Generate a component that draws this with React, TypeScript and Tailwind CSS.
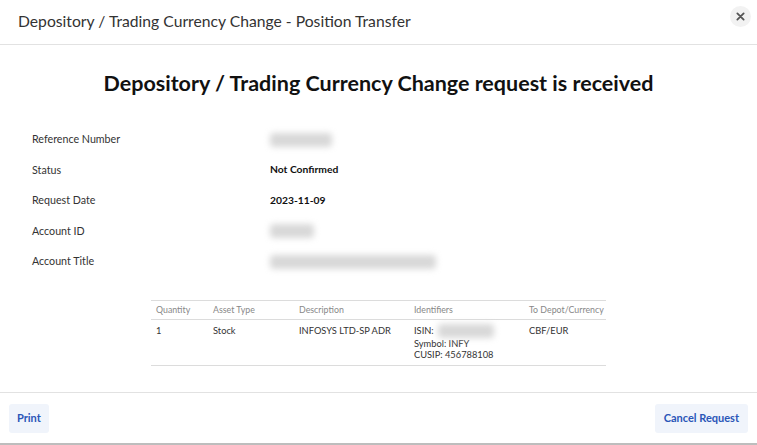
import * as React from "react";

const details: { label: string; value: string; blur?: number }[] = [
  { label: "Reference Number", value: "", blur: 62 },
  { label: "Status", value: "Not Confirmed" },
  { label: "Request Date", value: "2023-11-09" },
  { label: "Account ID", value: "", blur: 44 },
  { label: "Account Title", value: "", blur: 166 },
];

function Blurred({ width }: { width: number }) {
  return (
    <span className="inline-block h-[14px] align-middle" style={{ width }}>
      <span className="block h-full w-full rounded-sm bg-[#d8d8d8] blur-[3px]" />
    </span>
  );
}

export default function App() {
  return (
    <div className="flex h-[445px] w-[757px] flex-col bg-white font-['Lato',sans-serif] text-[#222]">
      {/* header */}
      <div className="flex h-[45px] items-center justify-between border-b border-[#e2e2e2] pl-[18px] pr-[6px]">
        <h2 className="text-[15.7px] font-normal text-[#333]">
          Depository / Trading Currency Change - Position Transfer
        </h2>
        <button className="mb-[12px] flex h-[21px] w-[21px] items-center justify-center rounded-full bg-[#f2f2f2]">
          <svg width="9" height="9" viewBox="0 0 10 10" stroke="#555" strokeWidth="2" strokeLinecap="round">
            <path d="M1.5 1.5l7 7M8.5 1.5l-7 7" />
          </svg>
        </button>
      </div>

      {/* body */}
      <div className="flex-1">
        <h1 className="mt-[22px] text-center text-[21.5px] font-bold text-[#111]">
          Depository / Trading Currency Change request is received
        </h1>

        <div className="mt-[25px] flex flex-col pl-[32px]">
          {details.map((d) => (
            <div key={d.label} className="flex h-[30.5px] items-center text-[10.7px]">
              <span className="w-[238px] text-[#333]">{d.label}</span>
              {d.blur ? (
                <Blurred width={d.blur} />
              ) : (
                <span className="text-[10.3px] font-bold text-[#111]">{d.value}</span>
              )}
            </div>
          ))}
        </div>

        <table className="mx-auto mt-[23px] w-[455px] table-fixed border-collapse text-left text-[9.3px]">
          <thead>
            <tr className="border-y border-[#dcdcdc] text-[8.8px] text-[#888]">
              <th className="h-[19px] w-[62px] pl-[5px] font-normal">Quantity</th>
              <th className="w-[86px] font-normal">Asset Type</th>
              <th className="w-[115px] font-normal">Description</th>
              <th className="w-[115px] font-normal">Identifiers</th>
              <th className="font-normal">To Depot/Currency</th>
            </tr>
          </thead>
          <tbody>
            <tr className="border-b border-[#dcdcdc] align-top text-[#333]">
              <td className="pl-[5px] pt-[4px]">1</td>
              <td className="pt-[4px]">Stock</td>
              <td className="pt-[4px]">INFOSYS LTD-SP ADR</td>
              <td className="pb-[4px] pt-[4px] leading-[11.5px]">
                <div className="flex items-center gap-[4px]">
                  ISIN: <Blurred width={56} />
                </div>
                <div>Symbol: INFY</div>
                <div>CUSIP: 456788108</div>
              </td>
              <td className="pt-[4px]">CBF/EUR</td>
            </tr>
          </tbody>
        </table>
      </div>

      {/* footer */}
      <div className="flex h-[51px] items-center justify-between border-t border-[#e2e2e2] px-[9px]">
        <button className="h-[29px] rounded-[3px] bg-[#f0f4fb] px-[8px] text-[11px] font-bold text-[#2a56b8]">
          Print
        </button>
        <button className="h-[29px] rounded-[3px] bg-[#f0f4fb] px-[9px] text-[11px] font-bold text-[#2a56b8]">
          Cancel Request
        </button>
      </div>
      <div className="h-[2px] bg-[#bdbdbd]" />
    </div>
  );
}
